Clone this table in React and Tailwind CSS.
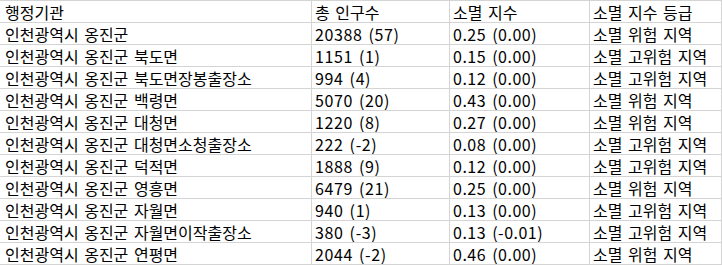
import React from "react";

const rows = [
  ["인천광역시 옹진군", "20388 (57)", "0.25 (0.00)", "소멸 위험 지역"],
  ["인천광역시 옹진군 북도면", "1151 (1)", "0.15 (0.00)", "소멸 고위험 지역"],
  ["인천광역시 옹진군 북도면장봉출장소", "994 (4)", "0.12 (0.00)", "소멸 고위험 지역"],
  ["인천광역시 옹진군 백령면", "5070 (20)", "0.43 (0.00)", "소멸 위험 지역"],
  ["인천광역시 옹진군 대청면", "1220 (8)", "0.27 (0.00)", "소멸 위험 지역"],
  ["인천광역시 옹진군 대청면소청출장소", "222 (-2)", "0.08 (0.00)", "소멸 고위험 지역"],
  ["인천광역시 옹진군 덕적면", "1888 (9)", "0.12 (0.00)", "소멸 고위험 지역"],
  ["인천광역시 옹진군 영흥면", "6479 (21)", "0.25 (0.00)", "소멸 위험 지역"],
  ["인천광역시 옹진군 자월면", "940 (1)", "0.13 (0.00)", "소멸 고위험 지역"],
  ["인천광역시 옹진군 자월면이작출장소", "380 (-3)", "0.13 (-0.01)", "소멸 고위험 지역"],
  ["인천광역시 옹진군 연평면", "2044 (-2)", "0.46 (0.00)", "소멸 위험 지역"],
];

const header = ["행정기관", "총 인구수", "소멸 지수", "소멸 지수 등급"];

// number columns are a bit wider in the reference font
const cellClass = [
  "pl-[5px]",
  "pl-[3px] tracking-[0.6px]",
  "pl-[3px] tracking-[0.5px]",
  "pl-[3px]",
];

const Row = ({ cells, head }) => (
  <div className="grid grid-cols-[312px_138px_140px_132px] h-[22px]">
    {cells.map((c, i) => (
      <div
        key={i}
        className={`${head ? "pl-[3px]" : cellClass[i]} ${
          i === 0 ? "pl-[5px]" : ""
        } border-r border-b border-[#d4d4d4] flex items-center whitespace-nowrap overflow-hidden`}
      >
        {c}
      </div>
    ))}
  </div>
);

const App = () => {
  return (
    <div
      className="w-[722px] bg-white text-black text-[16px] leading-none [word-spacing:2px] border-t border-[#d4d4d4]"
      style={{ fontFamily: '"Noto Sans CJK KR", "Noto Sans", sans-serif' }}
    >
      <Row cells={header} head />
      {rows.map((r, i) => (
        <Row key={i} cells={r} />
      ))}
    </div>
  );
};

export default App;
